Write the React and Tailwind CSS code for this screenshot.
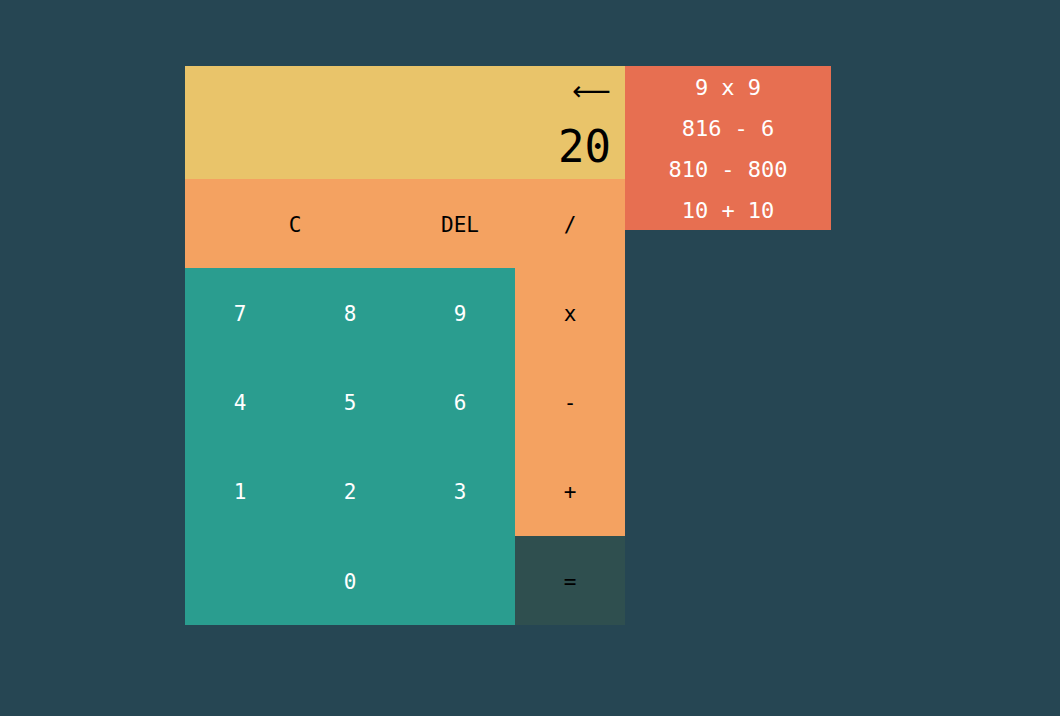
import React from "react";

const mono = { fontFamily: '"DejaVu Sans Mono", "Liberation Mono", monospace' };

function Btn({ children, className }) {
  return (
    <div className={"flex items-center justify-center text-[21px] pt-[4px] " + className}>
      {children}
    </div>
  );
}

export default function App() {
  const history = ["9 x 9", "816 - 6", "810 - 800", "10 + 10"];
  return (
    <div className="min-h-[716px] w-full bg-[#264653] pt-[66px] pl-[185px]" style={mono}>
      <div className="flex items-start">
        <div className="w-[440px]">
          <div className="h-[113px] bg-[#e9c46a] flex flex-col items-end pr-[14px] text-black">
            <div
              className="h-[48px] flex items-center text-[27px] leading-none"
              style={{ fontFamily: '"DejaVu Sans", sans-serif' }}
            >
              ⟵
            </div>
            <div className="flex-1 flex items-center text-[44px] leading-none">20</div>
          </div>
          <div className="grid grid-cols-4 grid-rows-5 h-[446px]">
            <Btn className="col-span-2 bg-[#f4a261] text-black">C</Btn>
            <Btn className="bg-[#f4a261] text-black">DEL</Btn>
            <Btn className="bg-[#f4a261] text-black">/</Btn>
            <Btn className="bg-[#2a9d8f] text-white">7</Btn>
            <Btn className="bg-[#2a9d8f] text-white">8</Btn>
            <Btn className="bg-[#2a9d8f] text-white">9</Btn>
            <Btn className="bg-[#f4a261] text-black">x</Btn>
            <Btn className="bg-[#2a9d8f] text-white">4</Btn>
            <Btn className="bg-[#2a9d8f] text-white">5</Btn>
            <Btn className="bg-[#2a9d8f] text-white">6</Btn>
            <Btn className="bg-[#f4a261] text-black">-</Btn>
            <Btn className="bg-[#2a9d8f] text-white">1</Btn>
            <Btn className="bg-[#2a9d8f] text-white">2</Btn>
            <Btn className="bg-[#2a9d8f] text-white">3</Btn>
            <Btn className="bg-[#f4a261] text-black">+</Btn>
            <Btn className="col-span-3 bg-[#2a9d8f] text-white">0</Btn>
            <Btn className="bg-[#2f4f4f] text-black">=</Btn>
          </div>
        </div>
        <div className="w-[206px] bg-[#e76f51] text-white flex flex-col">
          {history.map((h) => (
            <div key={h} className="h-[41px] flex items-center justify-center text-[22px] pt-[2px]">
              {h}
            </div>
          ))}
        </div>
      </div>
    </div>
  );
}
